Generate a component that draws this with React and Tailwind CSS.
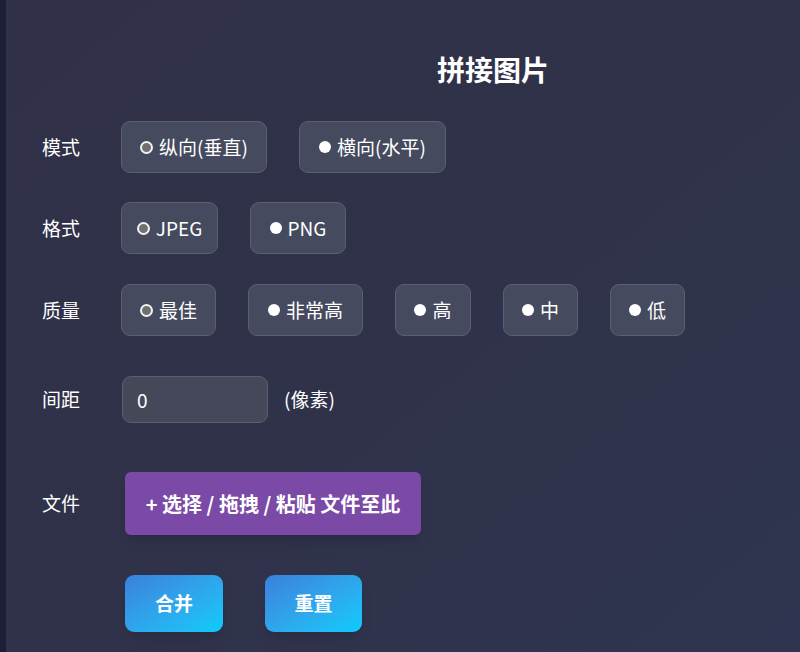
const font = { fontFamily: '"Microsoft YaHei", "Noto Sans CJK SC", "Noto Sans", sans-serif' };

function Choice({ label, checked, w }) {
  return (
    <button
      className={`h-[52px] ${w} flex items-center justify-center gap-[6px] rounded-[9px] border border-[#5b5f74] bg-[#454a5e] text-[19px] text-white`}
    >
      {checked ? (
        <span className="w-[13px] h-[13px] rounded-full border-2 border-[#f2f2f2] bg-[#707070]" />
      ) : (
        <span className="w-[12px] h-[12px] rounded-full bg-white" />
      )}
      <span>{label}</span>
    </button>
  );
}

function Row({ label, children, className = '' }) {
  return (
    <div className={`flex items-center ${className}`}>
      <span className="w-[79px] text-[19px] text-white">{label}</span>
      {children}
    </div>
  );
}

export default function App() {
  return (
    <div
      style={font}
      className="min-h-screen h-[652px] overflow-hidden flex bg-gradient-to-br from-[#303148] via-[#30324a] to-[#2f3550]"
    >
      <div className="w-[6px] bg-[#1d1f36]" />
      <div className="flex-1 pl-[36px] pt-[50px]">
        <h1 className="pl-[395px] text-[28px] font-bold text-white leading-[38px]">拼接图片</h1>

        <Row label="模式" className="mt-[33px]">
          <div className="flex gap-[32px]">
            <Choice label="纵向(垂直)" checked w="w-[146px]" />
            <Choice label="横向(水平)" w="w-[147px]" />
          </div>
        </Row>

        <Row label="格式" className="mt-[29px]">
          <div className="flex gap-[32px]">
            <Choice label="JPEG" checked w="w-[97px]" />
            <Choice label="PNG" w="w-[96px]" />
          </div>
        </Row>

        <Row label="质量" className="mt-[30px]">
          <div className="flex gap-[32px]">
            <Choice label="最佳" checked w="w-[95px]" />
            <Choice label="非常高" w="w-[115px]" />
            <Choice label="高" w="w-[76px]" />
            <Choice label="中" w="w-[75px]" />
            <Choice label="低" w="w-[75px]" />
          </div>
        </Row>

        <Row label="间距" className="mt-[40px]">
          <input
            defaultValue="0"
            className="ml-[1px] h-[47px] w-[146px] rounded-[9px] border border-[#5a5e72] bg-[#444859] px-[14px] text-[19px] text-white outline-none"
          />
          <span className="ml-[16px] text-[19px] text-white">(像素)</span>
        </Row>

        <Row label="文件" className="mt-[49px]">
          <button className="ml-[4px] h-[63px] w-[296px] rounded-[6px] bg-[#7a4aa6] text-[20px] font-bold text-white shadow-lg">
            + 选择 / 拖拽 / 粘贴 文件至此
          </button>
        </Row>

        <div className="mt-[40px] ml-[83px] flex gap-[42px]">
          <button className="h-[57px] w-[98px] rounded-[9px] bg-gradient-to-br from-[#3a80dc] to-[#08cbfb] text-[19px] font-bold text-white shadow-lg">
            合并
          </button>
          <button className="h-[57px] w-[97px] rounded-[9px] bg-gradient-to-br from-[#3a80dc] to-[#08cbfb] text-[19px] font-bold text-white shadow-lg">
            重置
          </button>
        </div>
      </div>
    </div>
  );
}
